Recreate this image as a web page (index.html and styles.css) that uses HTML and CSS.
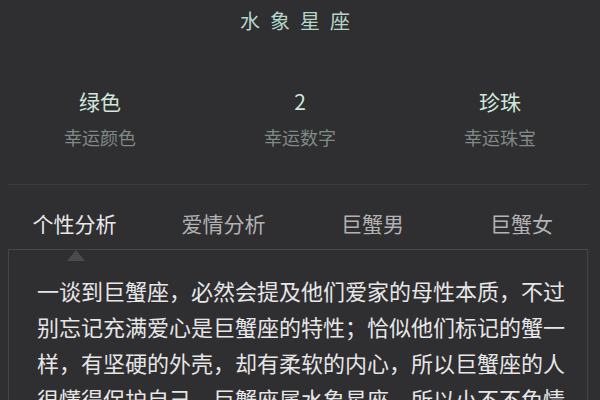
FILE: index.html
```html
<!DOCTYPE html>
<html lang="zh-CN">
<head>
<meta charset="utf-8">
<title>巨蟹座</title>
<link rel="stylesheet" href="styles.css">
</head>
<body>
<div class="page">
  <div class="title">水象星座</div>
  <div class="stats">
    <div class="stat">
      <div class="stat-value">绿色</div>
      <div class="stat-label">幸运颜色</div>
    </div>
    <div class="stat">
      <div class="stat-value">2</div>
      <div class="stat-label">幸运数字</div>
    </div>
    <div class="stat">
      <div class="stat-value">珍珠</div>
      <div class="stat-label">幸运珠宝</div>
    </div>
  </div>
  <div class="divider"></div>
  <div class="tabs">
    <div class="tab active">个性分析</div>
    <div class="tab">爱情分析</div>
    <div class="tab">巨蟹男</div>
    <div class="tab">巨蟹女</div>
  </div>
  <div class="panel">
    <p class="panel-text">一谈到巨蟹座，必然会提及他们爱家的母性本质，不过<br>别忘记充满爱心是巨蟹座的特性；恰似他们标记的蟹一<br>样，有坚硬的外壳，却有柔软的内心，所以巨蟹座的人<br>很懂得保护自己，巨蟹座属水象星座，所以小不不免情<br>绪化，容易受到外界环境的影响。</p>
  </div>
</div>
</body>
</html>
```
FILE: styles.css
```css
html, body {
  margin: 0;
  padding: 0;
  background: #2f2e31;
}
body {
  font-family: "Noto Sans CJK SC", "Noto Sans", sans-serif;
  overflow: hidden;
}
.page {
  width: 600px;
  height: 400px;
  overflow: hidden;
}
.title {
  padding-top: 9px;
  font-size: 20px;
  line-height: 24px;
  letter-spacing: 10px;
  text-align: center;
  color: #b6d6c8;
}
.stats {
  display: grid;
  grid-template-columns: 200px 200px 200px;
  margin-top: 55px;
}
.stat {
  display: flex;
  flex-direction: column;
  align-items: center;
  gap: 12px;
}
.stat-value {
  font-size: 21px;
  line-height: 26px;
  color: #d0e7dc;
}
.stat-label {
  font-size: 18px;
  line-height: 22px;
  color: #7f8a85;
}
.divider {
  margin: 36px 11px 0 8px;
  border-top: 1px solid #3c3b3f;
}
.tabs {
  display: grid;
  grid-template-columns: repeat(4, 149px);
  padding-top: 24px;
  height: 40px;
}
.tab {
  position: relative;
  text-align: center;
  font-size: 21px;
  line-height: 28px;
  color: #b2b2b2;
}
.tab.active {
  color: #e8e8e8;
}
.tab.active::after {
  content: "";
  position: absolute;
  left: 50%;
  bottom: -12px;
  margin-left: -8px;
  border-left: 9px solid transparent;
  border-right: 9px solid transparent;
  border-bottom: 11px solid #4a494d;
}
.panel {
  margin: 0 12px 0 8px;
  border: 1px solid #464549;
  border-bottom: none;
  padding: 22px 22px 0 28px;
  height: 200px;
}
.panel-text {
  margin: 0;
  font-size: 22px;
  line-height: 36px;
  color: #e6e6e6;
  text-align: justify;
  text-align-last: justify;
}
```
